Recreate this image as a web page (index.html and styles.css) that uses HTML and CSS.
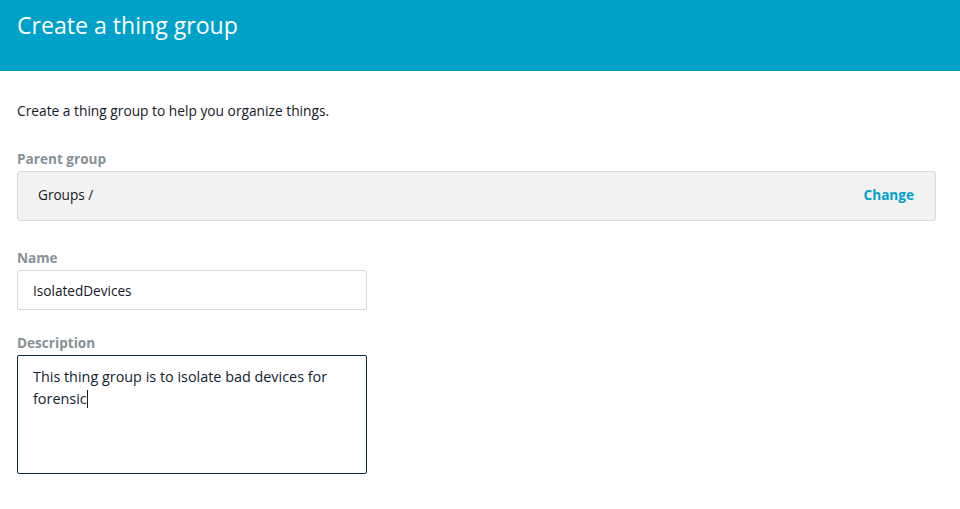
FILE: index.html
```html
<!DOCTYPE html>
<html>
<head>
<meta charset="utf-8">
<link rel="stylesheet" href="styles.css">
</head>
<body>
<header class="header">
  <h1 class="title">Create a thing group</h1>
</header>
<main class="content">
  <p class="intro">Create a thing group to help you organize things.</p>
  <div class="field field-parent">
    <div class="label">Parent group</div>
    <div class="parent-box">
      <span class="parent-path">Groups /</span>
      <a class="change-link">Change</a>
    </div>
  </div>
  <div class="field field-name">
    <div class="label">Name</div>
    <div class="input">IsolatedDevices</div>
  </div>
  <div class="field">
    <div class="label">Description</div>
    <div class="textarea">This thing group is to isolate bad devices for forensic<span class="caret"></span></div>
  </div>
</main>
</body>
</html>
```
FILE: styles.css
```css
html, body {
  margin: 0;
  padding: 0;
  background: #ffffff;
}
body {
  font-family: "Open Sans", Lato, sans-serif;
  color: #16191f;
  font-size: 13.6px;
  width: 960px;
  height: 509px;
  overflow: hidden;
}
.header {
  background: #00a1c9;
  height: 71px;
  box-sizing: border-box;
  padding: 9px 17px 0;
}
.title {
  margin: 0;
  font-size: 23.1px;
  font-weight: 400;
  color: #ffffff;
  line-height: 32px;
}
.content {
  padding: 29px 24px 0 17px;
}
.intro {
  margin: 0 0 27px;
  line-height: 22px;
  color: #16191f;
  font-size: 13.75px;
}
.field-parent {
  margin-bottom: 27px;
}
.field-name {
  margin-bottom: 23px;
}
.label {
  font-weight: 700;
  color: #879196;
  line-height: 20px;
  margin-bottom: 2px;
}
.parent-box {
  display: flex;
  justify-content: space-between;
  align-items: center;
  height: 50px;
  box-sizing: border-box;
  background: #f2f2f2;
  border: 1px solid #d5dbdb;
  border-radius: 3px;
  padding: 0 21px 3px 20px;
}
.parent-path {
  color: #16191f;
}
.change-link {
  color: #00a1c9;
  font-weight: 700;
}
.input {
  width: 350px;
  height: 40px;
  box-sizing: border-box;
  border: 1px solid #d5dbdb;
  border-radius: 2px;
  padding: 0 15px;
  display: flex;
  align-items: center;
  color: #16191f;
}
.textarea {
  width: 350px;
  height: 119px;
  box-sizing: border-box;
  border: 1px solid #0f2a37;
  border-radius: 2px;
  padding: 10px 15px 9px;
  line-height: 22px;
  font-size: 14.4px;
  color: #12232e;
}
.caret {
  display: inline-block;
  width: 1px;
  height: 18px;
  background: #16191f;
  vertical-align: -4px;
}
```
